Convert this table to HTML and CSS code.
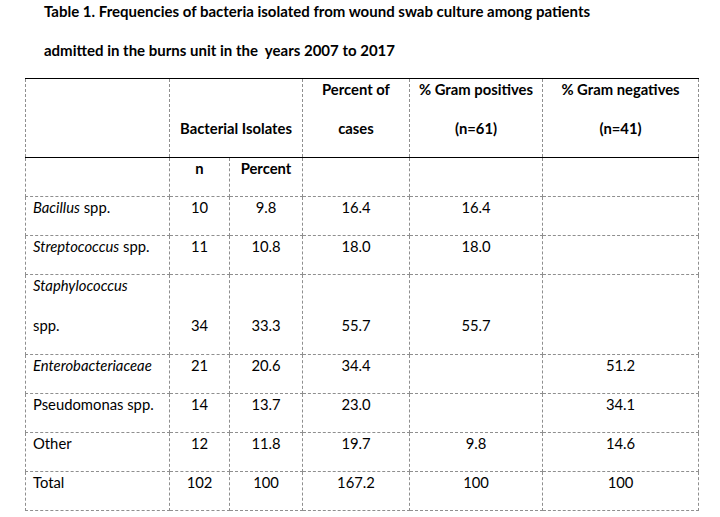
FILE: index.html
```html
<!DOCTYPE html>
<html>
<head>
<meta charset="utf-8">
<link rel="stylesheet" href="styles.css">
</head>
<body>
<div class="caption">
  <div class="cap-line">Table 1. Frequencies of bacteria isolated from wound swab culture among patients</div>
  <div class="cap-line">admitted in the burns unit in the&nbsp; years 2007 to 2017</div>
</div>
<table class="freq">
  <colgroup>
    <col class="c1"><col class="c2"><col class="c3"><col class="c4"><col class="c5"><col class="c6">
  </colgroup>
  <tr class="head tall solid-top solid-bottom">
    <td></td>
    <td colspan="2" class="num"><div class="ln"></div><div class="ln">Bacterial Isolates</div></td>
    <td class="num"><div class="ln">Percent of</div><div class="ln">cases</div></td>
    <td class="num"><div class="ln">% Gram positives</div><div class="ln">(n=61)</div></td>
    <td class="num"><div class="ln">% Gram negatives</div><div class="ln">(n=41)</div></td>
  </tr>
  <tr class="head">
    <td></td>
    <td class="num">n</td>
    <td class="num">Percent</td>
    <td></td><td></td><td></td>
  </tr>
  <tr>
    <td><i>Bacillus</i> spp.</td>
    <td class="num">10</td><td class="num">9.8</td><td class="num">16.4</td><td class="num">16.4</td><td></td>
  </tr>
  <tr>
    <td><i>Streptococcus</i> spp.</td>
    <td class="num">11</td><td class="num">10.8</td><td class="num">18.0</td><td class="num">18.0</td><td></td>
  </tr>
  <tr class="tall">
    <td><div class="ln"><i>Staphylococcus</i></div><div class="ln">spp.</div></td>
    <td class="num"><div class="ln"></div><div class="ln">34</div></td>
    <td class="num"><div class="ln"></div><div class="ln">33.3</div></td>
    <td class="num"><div class="ln"></div><div class="ln">55.7</div></td>
    <td class="num"><div class="ln"></div><div class="ln">55.7</div></td>
    <td></td>
  </tr>
  <tr>
    <td><i>Enterobacteriaceae</i></td>
    <td class="num">21</td><td class="num">20.6</td><td class="num">34.4</td><td></td><td class="num">51.2</td>
  </tr>
  <tr>
    <td>Pseudomonas spp.</td>
    <td class="num">14</td><td class="num">13.7</td><td class="num">23.0</td><td></td><td class="num">34.1</td>
  </tr>
  <tr>
    <td>Other</td>
    <td class="num">12</td><td class="num">11.8</td><td class="num">19.7</td><td class="num">9.8</td><td class="num">14.6</td>
  </tr>
  <tr>
    <td>Total</td>
    <td class="num">102</td><td class="num">100</td><td class="num">167.2</td><td class="num">100</td><td class="num">100</td>
  </tr>
</table>
</body>
</html>
```
FILE: styles.css
```css
html, body {
  margin: 0;
  padding: 0;
  background: #fff;
}
body {
  font-family: Lato, "Noto Sans", sans-serif;
  color: #000;
}
.caption {
  padding: 1px 0 0 44px;
  height: 78px;
  box-sizing: border-box;
  font-weight: bold;
  font-size: 15px;
  line-height: 20px;
  white-space: nowrap;
}
.cap-line + .cap-line {
  margin-top: 19px;
}
.freq {
  margin-left: 25px;
  border-collapse: collapse;
  table-layout: fixed;
  width: 673px;
  font-size: 14.8px;
  line-height: 20px;
}
.c1 { width: 144px; }
.c2 { width: 60px; }
.c3 { width: 73px; }
.c4 { width: 107px; }
.c5 { width: 133px; }
.c6 { width: 156px; }
.freq td {
  border: 1px dashed #8f8f8f;
  padding: 0 7px;
  height: 38px;
  vertical-align: top;
  white-space: nowrap;
}
.freq tr.tall td {
  height: 78px;
}
.freq .ln {
  height: 39.2px;
}
.freq .num {
  text-align: center;
}
.head td {
  font-weight: bold;
}
.solid-top td {
  border-top: 1.5px solid #000;
}
.solid-bottom td {
  border-bottom: 1.5px solid #000;
}
```
